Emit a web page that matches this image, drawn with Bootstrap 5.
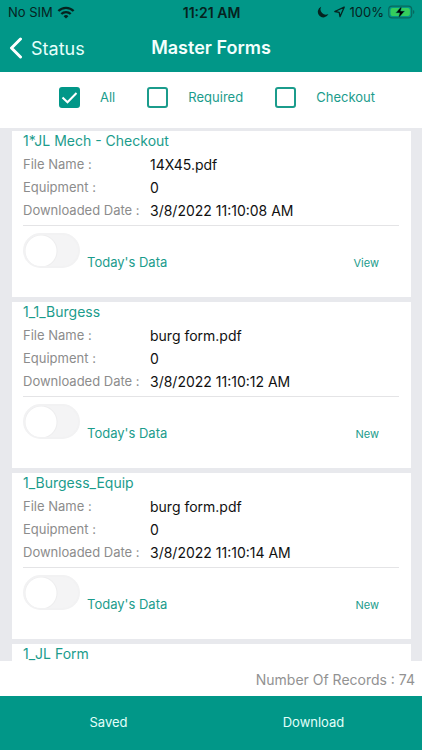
<!DOCTYPE html>
<html lang="en">
<head>
<meta charset="utf-8">
<meta name="viewport" content="width=device-width, initial-scale=1">
<title>Master Forms</title>
<link href="https://cdn.jsdelivr.net/npm/bootstrap@5.3.0/dist/css/bootstrap.min.css" rel="stylesheet">
<style>
:root { --teal: #019788; --ink: #1b9c8c; --rail: #e8e9ed; }
body { font-family: Inter, "Liberation Sans", sans-serif; font-size: 14px; line-height: 23px; color: #111; background: #fff; }
.app-head { background: var(--teal); }
.status-bar { height: 24px; padding: 0 7px 0 8px; color: #06231f; font-size: 13px; }
.clock { font-size: 14px; }
.side { flex: 1 1 0; }
.title-bar { height: 48px; padding: 0 8px; }
.back { color: #e6fffb; font-size: 18px; }
.screen-title { color: #f4fffd; font-size: 18px; font-weight: 600; }
.filters { height: 56px; padding: 0 47px 6px 59px; color: var(--ink); font-size: 13px; }
.filters .form-check-input { width: 21px; height: 21px; border: 2px solid var(--ink); border-radius: 3px; box-shadow: none; }
.filters .form-check-input:checked { background-color: var(--teal); border-color: var(--teal); background-origin: border-box; background-size: 21px 21px; background-image: url("data:image/svg+xml,%3Csvg xmlns='http://www.w3.org/2000/svg' viewBox='0 0 21 21'%3E%3Cpath d='M3.5 10.5l5 4.8 9-9.3' fill='none' stroke='%23fff' stroke-width='2'/%3E%3C/svg%3E"); }
.filters label { gap: 20px; }
.forms { background: var(--rail); padding: 3px 11px 0 12px; gap: 5px; min-height: 0; }
.form-item { background: #fff; padding: 0 12px 0 11px; height: 166px; }
.form-title { margin: 0; padding-bottom: 2px; color: var(--ink); font-size: 14px; line-height: 20px; font-weight: 400; }
.fields dt { width: 127px; font-size: 13px; font-weight: 400; color: #8c8c8c; }
.fields dd { color: #111; }
.tools { border-top: 1px solid #e4e4e6; margin-top: 3px; padding: 7px 20px 0 0; color: var(--ink); }
.tools label { padding: 18px 0 0 7px; font-size: 13px; }
.tools .form-check-input { width: 57px; height: 35px; border: 2px solid #f2f2f3; border-radius: 18px; background: #f4f4f5 radial-gradient(circle at 16px 16px, #fff 15px, #ededee 16px, #f4f4f5 17px); box-shadow: none; }
.tools .form-check-input:checked { background: #34c759 radial-gradient(circle at 37px 16px, #fff 15px, #34c759 16px); }
.act { color: var(--ink); font-size: 11px; line-height: 23px; margin-top: 19px; }
.records { height: 35px; padding: 2px 7px 0; color: #929292; font-size: 14px; }
.app-foot { background: var(--teal); height: 54px; padding: 0 6px; }
.app-foot .btn { color: #e2fffa; font-size: 13px; }
</style>
<script src="https://cdn.jsdelivr.net/npm/bootstrap@5.3.0/dist/js/bootstrap.bundle.min.js"></script>
</head>
<body>
<div class="vh-100 d-flex flex-column overflow-hidden">
<header class="app-head flex-shrink-0">
  <div class="status-bar d-flex align-items-center">
    <div class="side d-flex align-items-center gap-1">
      <span>No SIM</span>
      <svg width="18" height="13" viewBox="0 0 18 13" fill="none" stroke="#06231f" stroke-width="2.3" aria-label="Wi-Fi"><path d="M1.4 5a10.6 10.6 0 0 1 15.2 0M4.3 8a6.6 6.6 0 0 1 9.4 0"/><path d="M9 12.6 6.6 10.2a3.4 3.4 0 0 1 4.8 0z" fill="#06231f" stroke="none"/></svg>
    </div>
    <strong class="clock fw-semibold">11:21 AM</strong>
    <div class="side d-flex align-items-center justify-content-end gap-1">
      <svg width="12" height="12" viewBox="0 0 12 12" fill="#06231f" aria-label="Do not disturb"><path d="M4.2.8A5.5 5.5 0 1 0 11.4 8 5.3 5.3 0 0 1 4.2.8z"/></svg>
      <svg width="13" height="12" viewBox="0 0 13 12" fill="none" stroke="#06231f" stroke-width="1.3" stroke-linejoin="round" aria-label="Location"><path d="M11.2 1.2 1.8 5.5l4.4.8.8 4.4z"/></svg>
      <span>100%</span>
      <svg width="27" height="14" viewBox="0 0 27 14" aria-label="Battery charging"><rect x=".7" y="1.2" width="23" height="11.6" rx="3.4" fill="none" stroke="#08685e" stroke-width="1.2"/><rect x="2.5" y="3" width="19.4" height="8" rx="2" fill="#35cd5c"/><path d="M25 5v4q1.4-.5 1.4-2T25 5z" fill="#08685e"/><path d="M13.8.8 7.8 7.9h3.8L10.4 13.3l6.3-7.2h-4z" fill="#000" stroke="#159778" stroke-width=".5"/></svg>
    </div>
  </div>
  <div class="title-bar d-flex align-items-center">
    <div class="side d-flex"><a href="#" class="back d-flex align-items-center gap-2 text-decoration-none"><svg width="15" height="22" viewBox="0 0 15 22" fill="none" stroke="#fff" stroke-width="3" stroke-linecap="round" stroke-linejoin="round" aria-hidden="true"><path d="M12.5 2 3.5 11l9 9"/></svg>Status</a></div>
    <h1 class="screen-title m-0">Master Forms</h1>
    <div class="side"></div>
  </div>
</header>
<div class="filters d-flex align-items-center justify-content-between flex-shrink-0">
  <label class="d-flex align-items-center"><input type="checkbox" class="form-check-input m-0" checked>All</label>
  <label class="d-flex align-items-center"><input type="checkbox" class="form-check-input m-0">Required</label>
  <label class="d-flex align-items-center"><input type="checkbox" class="form-check-input m-0">Checkout</label>
</div>
<main class="forms d-flex flex-column flex-grow-1 overflow-hidden">
  <article class="form-item flex-shrink-0">
    <h2 class="form-title">1*JL Mech - Checkout</h2>
    <dl class="fields m-0">
      <div class="d-flex"><dt>File Name :</dt><dd class="m-0">14X45.pdf</dd></div>
      <div class="d-flex"><dt>Equipment :</dt><dd class="m-0">0</dd></div>
      <div class="d-flex"><dt>Downloaded Date :</dt><dd class="m-0">3/8/2022 11:10:08 AM</dd></div>
    </dl>
    <div class="tools d-flex align-items-start">
      <input type="checkbox" role="switch" class="form-check-input m-0 flex-shrink-0" id="today1"><label for="today1">Today's Data</label>
      <button type="button" class="act btn p-0 border-0 ms-auto">View</button>
    </div>
  </article>
  <article class="form-item flex-shrink-0">
    <h2 class="form-title">1_1_Burgess</h2>
    <dl class="fields m-0">
      <div class="d-flex"><dt>File Name :</dt><dd class="m-0">burg form.pdf</dd></div>
      <div class="d-flex"><dt>Equipment :</dt><dd class="m-0">0</dd></div>
      <div class="d-flex"><dt>Downloaded Date :</dt><dd class="m-0">3/8/2022 11:10:12 AM</dd></div>
    </dl>
    <div class="tools d-flex align-items-start">
      <input type="checkbox" role="switch" class="form-check-input m-0 flex-shrink-0" id="today2"><label for="today2">Today's Data</label>
      <button type="button" class="act btn p-0 border-0 ms-auto">New</button>
    </div>
  </article>
  <article class="form-item flex-shrink-0">
    <h2 class="form-title">1_Burgess_Equip</h2>
    <dl class="fields m-0">
      <div class="d-flex"><dt>File Name :</dt><dd class="m-0">burg form.pdf</dd></div>
      <div class="d-flex"><dt>Equipment :</dt><dd class="m-0">0</dd></div>
      <div class="d-flex"><dt>Downloaded Date :</dt><dd class="m-0">3/8/2022 11:10:14 AM</dd></div>
    </dl>
    <div class="tools d-flex align-items-start">
      <input type="checkbox" role="switch" class="form-check-input m-0 flex-shrink-0" id="today3"><label for="today3">Today's Data</label>
      <button type="button" class="act btn p-0 border-0 ms-auto">New</button>
    </div>
  </article>
  <article class="form-item flex-shrink-0">
    <h2 class="form-title">1_JL Form</h2>
  </article>
</main>
<div class="records d-flex align-items-center justify-content-end flex-shrink-0">Number Of Records : 74</div>
<footer class="app-foot d-flex flex-shrink-0">
  <button type="button" class="btn rounded-0 border-0 w-50">Saved</button>
  <button type="button" class="btn rounded-0 border-0 w-50">Download</button>
</footer>
</div>
</body>
</html>
